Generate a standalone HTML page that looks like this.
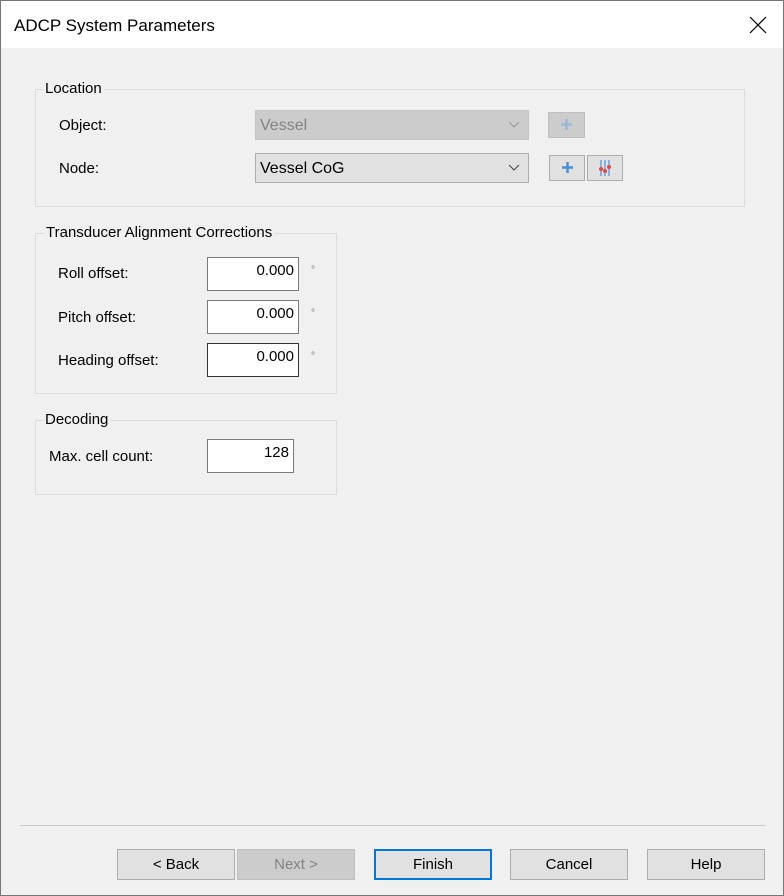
<!DOCTYPE html>
<html><head><meta charset="utf-8"><style>
*{box-sizing:border-box;margin:0;padding:0}
body{width:784px;height:896px;background:#f0f0f0;font-family:"Liberation Sans",sans-serif;font-size:15px;color:#000;position:relative;overflow:hidden}
.a{position:absolute}
.win{left:0;top:0;width:784px;height:896px;border:1px solid #777}
.title{left:1px;top:1px;width:782px;height:47px;background:#fff}
.grp{border:1px solid #dcdcdc}
.lg{background:#f0f0f0;padding:0 2px;line-height:18px}
.tb{background:#fff;border:1px solid #7a7a7a;text-align:right;padding-right:4px;line-height:26px}
.btn{background:#e1e1e1;border:1px solid #adadad;text-align:center;line-height:30px}
.deg{font-size:10px;color:#777}
</style></head><body>
<div class="a win"></div>
<div class="a title"></div>
<div class="a" style="left:14px;top:16px;font-size:17px">ADCP System Parameters</div>
<svg class="a" style="left:749px;top:16px" width="18" height="18"><path d="M1 1L17 17M17 1L1 17" stroke="#000" stroke-width="1.2"/></svg>

<div class="a grp" style="left:35px;top:89px;width:710px;height:118px"></div>
<div class="a lg" style="left:43px;top:80px">Location</div>
<div class="a" style="left:59px;top:117px">Object:</div>
<div class="a" style="left:255px;top:110px;width:274px;height:30px;background:#ccc;border:1px solid #c4c4c4;color:#838383;padding-left:4px;line-height:29px;font-size:16px">Vessel</div>
<svg class="a" style="left:508px;top:121px" width="12" height="8"><path d="M1 1L6 6L11 1" stroke="#999" fill="none"/></svg>
<div class="a" style="left:548px;top:112px;width:37px;height:26px;background:#ccc;border:1px solid #bfbfbf"></div>
<svg class="a" style="left:560px;top:118px" width="13" height="13"><path d="M6.5 1V12M1 6.5H12" stroke="#9ab8d8" stroke-width="2.5"/></svg>
<div class="a" style="left:59px;top:160px">Node:</div>
<div class="a" style="left:255px;top:153px;width:274px;height:30px;background:#e1e1e1;border:1px solid #adadad;padding-left:4px;line-height:29px;font-size:16px">Vessel CoG</div>
<svg class="a" style="left:508px;top:164px" width="12" height="8"><path d="M1 1L6 6L11 1" stroke="#444" fill="none"/></svg>
<div class="a" style="left:549px;top:155px;width:36px;height:26px;background:#e1e1e1;border:1px solid #adadad"></div>
<svg class="a" style="left:561px;top:161px" width="13" height="13"><path d="M6.5 1V12M1 6.5H12" stroke="#4a8fd8" stroke-width="2.5"/></svg>
<div class="a" style="left:587px;top:155px;width:36px;height:26px;background:#e1e1e1;border:1px solid #adadad"></div>
<svg class="a" style="left:598px;top:159px" width="14" height="18"><path d="M3 1V17M7 1V17M11 1V17" stroke="#6a9fd8" stroke-width="1.5"/><circle cx="3" cy="10" r="2" fill="#e24a4a"/><circle cx="7" cy="12" r="2" fill="#e24a4a"/><circle cx="11" cy="8" r="2" fill="#e24a4a"/></svg>

<div class="a grp" style="left:35px;top:233px;width:302px;height:161px"></div>
<div class="a lg" style="left:44px;top:224px">Transducer Alignment Corrections</div>
<div class="a" style="left:58px;top:265px">Roll offset:</div>
<div class="a tb" style="left:207px;top:257px;width:92px;height:34px">0.000</div>
<div class="a deg" style="left:311px;top:265px">°</div>
<div class="a" style="left:58px;top:309px">Pitch offset:</div>
<div class="a tb" style="left:207px;top:300px;width:92px;height:34px">0.000</div>
<div class="a deg" style="left:311px;top:308px">°</div>
<div class="a" style="left:58px;top:352px">Heading offset:</div>
<div class="a tb" style="left:207px;top:343px;width:92px;height:34px;border-color:#333">0.000</div>
<div class="a deg" style="left:311px;top:351px">°</div>

<div class="a grp" style="left:35px;top:420px;width:302px;height:75px"></div>
<div class="a lg" style="left:43px;top:411px">Decoding</div>
<div class="a" style="left:49px;top:448px">Max. cell count:</div>
<div class="a tb" style="left:207px;top:439px;width:87px;height:34px">128</div>

<div class="a" style="left:20px;top:825px;width:745px;height:1px;background:#c8c8c8"></div>
<div class="a btn" style="left:117px;top:849px;width:118px;height:31px">&lt; Back</div>
<div class="a btn" style="left:237px;top:849px;width:118px;height:31px;background:#ccc;border-color:#bfbfbf;color:#838383">Next &gt;</div>
<div class="a btn" style="left:374px;top:849px;width:118px;height:31px;border:2px solid #0078d7;line-height:28px">Finish</div>
<div class="a btn" style="left:510px;top:849px;width:118px;height:31px">Cancel</div>
<div class="a btn" style="left:647px;top:849px;width:118px;height:31px">Help</div>
</body></html>
